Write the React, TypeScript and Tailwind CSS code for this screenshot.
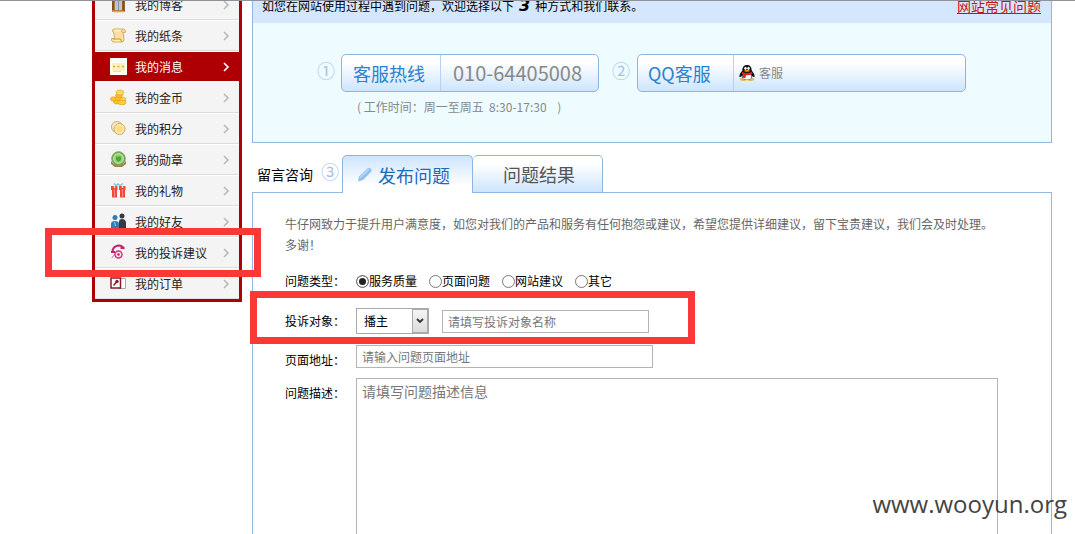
import { useState, type ReactNode } from "react";

type MenuItem = {
  label: string;
  icon: ReactNode;
  active?: boolean;
  marked?: boolean;
};

const menu: MenuItem[] = [
  {
    label: "我的博客",
    icon: (
      <>
        <rect x="2" y="1" width="13" height="15" rx="1" fill="#b27a3c" />
        <rect x="5" y="2" width="7" height="12" fill="#b9c6d6" />
        <path d="M8.500 2v12" stroke="#8494a8" />
        <path d="M3 3v11" stroke="#6b4a2c" strokeWidth="1.500" />
        <path d="M13.500 2v13" stroke="#7a4d22" strokeWidth="2" />
        <path d="M3 15.500h11" stroke="#e0a04c" strokeWidth="1.500" />
      </>
    ),
  },
  {
    label: "我的纸条",
    icon: (
      <>
        <path d="M4 2h10q2 1 1 3.500h-2L14 12q0 3-2 3H3q-2-1-1.500-3.500h3L4 6Q2 5 2.500 3z" fill="#f9e0a0" stroke="#d9ab50" />
        <path d="M5 3.500h7M4 13.500h6" stroke="#fff3cc" strokeWidth="1.500" />
        <path d="M12.500 5.500Q11 5 12 3M3 12h7.500q0 2 1.500 2.500" fill="none" stroke="#cf983c" />
      </>
    ),
  },
  {
    label: "我的消息",
    active: true,
    icon: (
      <>
        <rect width="17" height="17" fill="#fffdf3" />
        <path d="M2 5h13v8H6l-3 2v-2H2z" fill="#fdf0bd" />
        <path d="M3 8.500h2M7.500 8.500h2M12 8.500h2" stroke="#dba93a" strokeWidth="1.500" />
        <path d="M3 13.500h8" stroke="#f1dc96" />
      </>
    ),
  },
  {
    label: "我的金币",
    icon: (
      <g fill="#fcc22a" stroke="#e09a10" strokeWidth=".6">
        <ellipse cx="7" cy="13" rx="3.500" ry="2" />
        <ellipse cx="3.500" cy="10" rx="3" ry="2.200" />
        <ellipse cx="9" cy="9.500" rx="3.500" ry="2" />
        <ellipse cx="9" cy="6.500" rx="3.500" ry="2" />
        <ellipse cx="10" cy="3.500" rx="3.800" ry="2.500" fill="#ffdc55" />
        <ellipse cx="13" cy="10.500" rx="3" ry="2.200" fill="#ffd84a" />
        <ellipse cx="12" cy="13.500" rx="4" ry="2.300" fill="#ffcf36" />
      </g>
    ),
  },
  {
    label: "我的积分",
    icon: (
      <>
        <circle cx="7" cy="7" r="5.500" fill="#f8edcd" stroke="#c9ae78" />
        <circle cx="9.500" cy="9" r="5.500" fill="#fff2c4" stroke="#c9a25c" />
        <circle cx="9.500" cy="9" r="3.800" fill="#fbdc83" />
      </>
    ),
  },
  {
    label: "我的勋章",
    icon: (
      <>
        <path d="M1 10l3 3h9l3-3v3l-4 3H5l-4-3z" fill="#a3804e" />
        <circle cx="8.500" cy="7.500" r="6.800" fill="#6fae4c" stroke="#8f9c6c" />
        <circle cx="8.500" cy="7.500" r="4.800" fill="#8fd36c" stroke="#d3efbb" />
        <path d="M6 5.500h5V9l-2.500 2L6 9z" fill="#4fa838" />
      </>
    ),
  },
  {
    label: "我的礼物",
    icon: (
      <>
        <path d="M4 1.500l2 2 2-1.500 2 1.500 3-2" fill="none" stroke="#7cc6e6" strokeWidth="1.500" />
        <path d="M1 4h6.500v4H1zM9 4h6.500v4H9zM2 7h5v8.500H2zM10 7h5v8.500h-5z" fill="#ee4b3c" />
        <path d="M4.500 4v2M12.500 4v2" stroke="#b9e3f3" strokeWidth="1.500" />
        <path d="M4.500 7v8M12.500 7v8" stroke="#f78577" />
      </>
    ),
  },
  {
    label: "我的好友",
    icon: (
      <>
        <circle cx="5" cy="4.500" r="2.500" fill="#2b7fbd" />
        <path d="M1 16v-5q0-3 4-3t4 3v5z" fill="#2b7fbd" />
        <circle cx="12" cy="3" r="2.500" fill="#333b41" />
        <path d="M9 16v-7q0-3 3-3t4 3v7z" fill="#333b41" />
        <path d="M4.500 9l1 4" stroke="#9fcdea" />
      </>
    ),
  },
  {
    label: "我的投诉建议",
    marked: true,
    icon: (
      <>
        <path d="M2.500 7.500Q3 2 8.500 1.500q4 0 5 3" fill="none" stroke="#c2246a" strokeWidth="2" />
        <path d="M1 8h4M10.500 4h4" stroke="#c2246a" strokeWidth="2" />
        <path d="M7 6.500L4.500 11q-2 1-2.500 3" fill="none" stroke="#d27a9e" />
        <circle cx="8.500" cy="10.500" r="3.500" fill="#fbe3ec" stroke="#cf3a78" strokeWidth="1.500" />
        <circle cx="8.500" cy="10.500" r="1.300" fill="#c2246a" />
      </>
    ),
  },
  {
    label: "我的订单",
    icon: (
      <>
        <path d="M9 3.500h6.500v10H9z" fill="#fff" stroke="#aaa" />
        <rect x="1" y="3" width="9.500" height="10" fill="#fff" stroke="#8b1a2a" strokeWidth="1.500" />
        <circle cx="7" cy="6.500" r="1.700" fill="#8b1a2a" />
        <path d="M6.500 7L3.500 10.500" stroke="#8b1a2a" strokeWidth="1.500" />
      </>
    ),
  },
];

const types = ["服务质量", "页面问题", "网站建议", "其它"];

function Penguin() {
  return (
    <svg viewBox="0 0 16 16" className="h-4 w-4 shrink-0" aria-hidden="true">
      <ellipse cx="4.500" cy="14.500" rx="3.700" ry="1.400" fill="#e8b64c" />
      <ellipse cx="11.500" cy="14.500" rx="3.700" ry="1.400" fill="#e8b64c" />
      <path d="M8 0C4.500 0 3.300 2.500 3.300 5.500 1.500 8 0 9.500.5 12c.6.5 1.500-.5 2-1 .5 2.500 2.500 4 5.500 4s5-1.500 5.500-4c.5.500 1.400 1.500 2 1 .5-2.500-1-4-2.800-6.500C12.700 2.500 11.500 0 8 0z" fill="#111" />
      <ellipse cx="8" cy="11.500" rx="4.500" ry="3.300" fill="#fff" />
      <ellipse cx="6.500" cy="3.300" rx="1.200" ry="1.600" fill="#fff" />
      <ellipse cx="9.500" cy="3.300" rx="1.200" ry="1.600" fill="#fff" />
      <ellipse cx="8" cy="5.800" rx="2.800" ry=".9" fill="#f5a623" />
      <path d="M3 6.800q5 2.500 10 0l.3 2.200q-3.300 1.500-6.300 1.200l-.5 2.800-2.700-.3.400-3L3 9z" fill="#e0201b" />
    </svg>
  );
}

function Pencil() {
  return (
    <svg viewBox="0 0 15 15" className="h-[15px] w-[15px]" aria-hidden="true">
      <path d="M0 14.500l1-5L9.500 1.500q1.700-1.300 3.200 0t.5 3.300L5 13z" fill="#94c0ec" />
      <path d="M2 10.500L11 2" stroke="#b9d8f5" strokeWidth="1.500" />
    </svg>
  );
}

export default function App() {
  const [type, setType] = useState("服务质量");
  const [tab, setTab] = useState("post");

  return (
    <div className="relative h-screen overflow-hidden border-t border-[#8f929b] bg-white font-['Noto_Sans_CJK_SC',sans-serif] text-xs text-black">
      <div className="-mt-3 flex items-start gap-[10px] pr-[23px] pl-[92px]">
        {/* 左侧菜单 */}
        <nav className="w-[150px] shrink-0 border-x-[3px] border-b-[3px] border-[#ae0004]">
          <ul>
            {menu.map((item) => (
              <li
                key={item.label}
                className={
                  item.active
                    ? "relative border-t border-b border-t-white border-b-[#f4f4f4] bg-[#ae0004] text-white"
                    : "relative border-t border-b border-t-white border-b-[#dcdcdc] bg-[#f4f4f4] text-[#222]"
                }
              >
                <a href="#" className="flex h-[29px] items-center gap-2 pr-[9px] pl-[15px]">
                  <svg viewBox="0 0 17 17" className="h-[17px] w-[17px] shrink-0" aria-hidden="true">
                    {item.icon}
                  </svg>
                  <span className="flex-1 whitespace-nowrap">{item.label}</span>
                  <svg viewBox="0 0 8 10" className="h-[10px] w-2" aria-hidden="true">
                    <path d="M2 1l4 4-4 4" fill="none" stroke={item.active ? "#fff" : "#b9b9b9"} strokeWidth="1.600" />
                  </svg>
                </a>
                {item.marked && (
                  <div className="pointer-events-none absolute -top-[10px] -right-[22px] -bottom-[10px] -left-[50px] z-10 border-[7px] border-[#fb3838]" />
                )}
              </li>
            ))}
          </ul>
        </nav>

        <main className="min-w-0 flex-1">
          {/* 联系方式 */}
          <section className="border-x border-b border-[#92b8df] bg-[#eefcff]">
            <div className="flex h-[34px] items-center justify-between bg-[#d5e7fd] pr-[10px] pl-[9px]">
              <p className="flex items-center">
                如您在网站使用过程中遇到问题，欢迎选择以下
                <b className="px-[5px] font-['DejaVu_Sans',sans-serif] text-base leading-4 italic">3</b>
                种方式和我们联系。
              </p>
              <a href="#" className="text-sm text-[#cc1020] underline">
                网站常见问题
              </a>
            </div>
            <div className="flex h-[119px] items-start pt-[31px] pl-16">
              <span className="w-6 text-lg leading-8 text-[#a3c3ea]">①</span>
              <div>
                <div className="flex h-[38px] w-[258px] items-center rounded-[5px] border border-[#8db5df] bg-linear-to-b from-white from-20% to-[#cde5fd]">
                  <span className="flex h-full w-[99px] items-center border-r border-[#b4d3f2] pl-[11px] text-lg text-[#2b82cf]">
                    客服热线
                  </span>
                  <span className="pl-3 text-xl text-[#888]">010-64405008</span>
                </div>
                <p className="mt-[7px] pl-4 whitespace-pre text-[#888]">{"( 工作时间：周一至周五  8:30-17:30    )"}</p>
              </div>
              <span className="ml-[13px] w-[25px] text-lg leading-8 text-[#a3c3ea]">②</span>
              <div className="flex h-[38px] w-[329px] items-center rounded-[5px] border border-[#8db5df] bg-linear-to-b from-white from-20% to-[#cde5fd]">
                <span className="flex h-full w-[96px] items-center border-r border-[#b4d3f2] pl-[10px] text-lg text-[#2b82cf]">
                  QQ客服
                </span>
                <a href="#" className="flex items-center gap-1 pl-[5px] text-[#888]">
                  <Penguin />
                  客服
                </a>
              </div>
            </div>
          </section>

          {/* 留言咨询 */}
          <div className="mt-3 flex h-[37px] items-start pl-[5px]">
            <h2 className="w-16 text-sm leading-[38px]">留言咨询</h2>
            <span className="w-[21px] text-lg leading-8 text-[#a3c3ea]">③</span>
            <div role="tablist" className="flex">
              <button
                role="tab"
                aria-selected={tab === "post"}
                onClick={() => setTab("post")}
                className="z-10 flex h-[38px] w-[131px] items-center gap-[5px] rounded-t-[5px] border border-b-0 border-[#8db5df] bg-linear-to-b from-[#cde5fd] to-white to-80% pl-[15px] text-lg text-[#1a6dbd]"
              >
                <Pencil />
                发布问题
              </button>
              <button
                role="tab"
                aria-selected={tab === "result"}
                onClick={() => setTab("result")}
                className="h-[38px] w-[130px] rounded-t-[5px] border border-l-0 border-[#8db5df] bg-linear-to-b from-white from-20% to-[#cde5fd] pl-[3px] text-lg text-[#555]"
              >
                问题结果
              </button>
            </div>
          </div>

          <section className="border border-[#92b8df] px-8 pt-5">
            <p className="leading-[21px] text-[#666]">
              牛仔网致力于提升用户满意度，如您对我们的产品和服务有任何抱怨或建议，希望您提供详细建议，留下宝贵建议，我们会及时处理。
              <br />
              多谢！
            </p>

            <form onSubmit={(e) => e.preventDefault()}>
              <fieldset className="mt-[14px] flex h-6 items-center">
                <legend className="float-left w-[71px]">问题类型：</legend>
                <div className="flex gap-3">
                  {types.map((t) => (
                    <label key={t} className="flex items-center">
                      <input
                        type="radio"
                        name="type"
                        checked={type === t}
                        onChange={() => setType(t)}
                        className="h-[13px] w-[13px] appearance-none rounded-full border border-[#777] bg-white checked:bg-[#222] checked:shadow-[inset_0_0_0_2px_white]"
                      />
                      {t}
                    </label>
                  ))}
                </div>
              </fieldset>

              <div className="relative mt-[15px] flex h-[26px] items-center">
                <label htmlFor="target" className="w-[71px]">
                  投诉对象：
                </label>
                <div className="relative">
                  <select
                    id="target"
                    className="block h-[26px] w-[73px] appearance-none border border-[#aaa] bg-white pl-[7px]"
                  >
                    <option>播主</option>
                    <option>网站</option>
                  </select>
                  <span className="pointer-events-none absolute inset-y-px right-px flex w-4 items-center justify-center border border-[#aaa] bg-linear-to-b from-[#f5f5f5] to-[#dcdcdc]">
                    <svg viewBox="0 0 8 6" className="h-[6px] w-2" aria-hidden="true">
                      <path d="M1 1l3 3 3-3" fill="none" stroke="#333" strokeWidth="1.800" />
                    </svg>
                  </span>
                </div>
                <input
                  aria-label="投诉对象名称"
                  placeholder="请填写投诉对象名称"
                  className="ml-[13px] h-[23px] w-[207px] border border-[#b4b4b4] px-[5px] placeholder:text-[#777]"
                />
                <div className="pointer-events-none absolute -top-[17px] -bottom-[10px] -left-[35px] w-[445px] border-[7px] border-[#fb3838]" />
              </div>

              <div className="mt-[11px] flex items-start">
                <label htmlFor="url" className="w-[71px] pt-[7px]">
                  页面地址：
                </label>
                <input
                  id="url"
                  placeholder="请输入问题页面地址"
                  className="h-[23px] w-[297px] border border-[#b4b4b4] px-[5px] placeholder:text-[#777]"
                />
              </div>

              <div className="mt-[10px] flex items-start">
                <label htmlFor="desc" className="w-[71px] shrink-0 pt-[7px]">
                  问题描述：
                </label>
                <textarea
                  id="desc"
                  placeholder="请填写问题描述信息"
                  className="mr-[21px] h-60 min-w-0 flex-1 resize-none border border-[#b4b4b4] px-[5px] py-0.5 text-sm placeholder:text-[#777]"
                />
              </div>
            </form>
          </section>
        </main>
      </div>

      <div className="pointer-events-none absolute right-2 bottom-3 font-['Open_Sans',sans-serif] text-2xl leading-9 text-[#444]">
        www.wooyun.org
      </div>
    </div>
  );
}
